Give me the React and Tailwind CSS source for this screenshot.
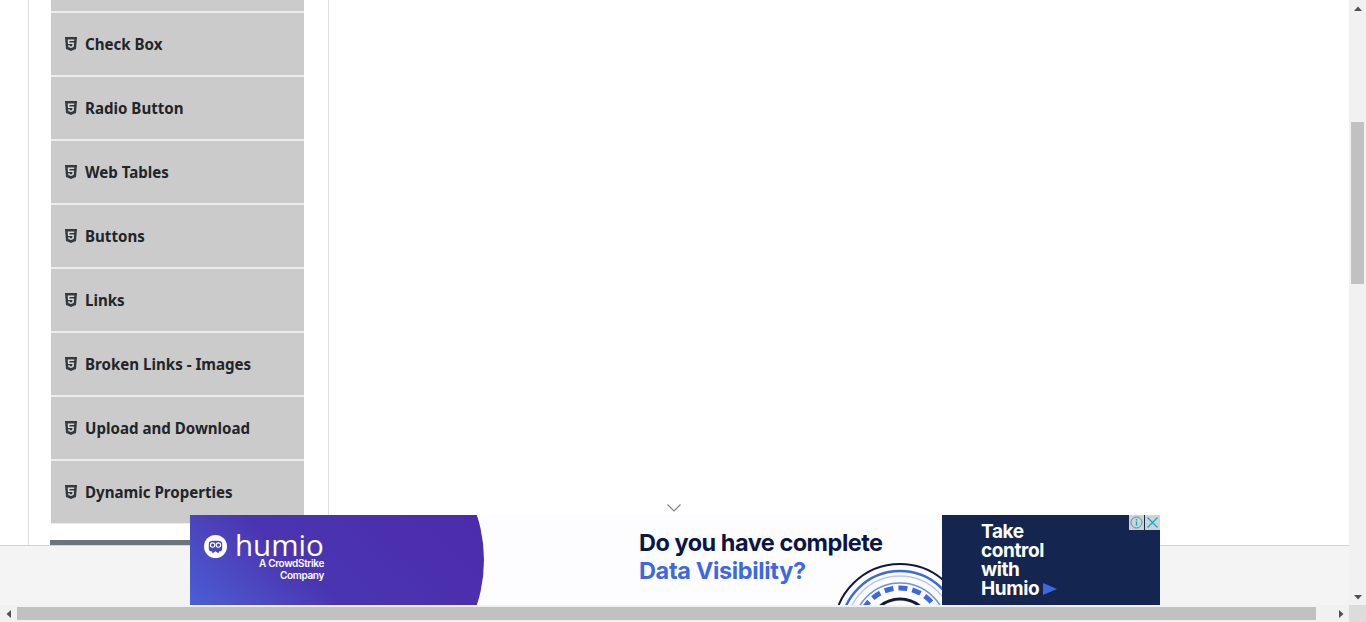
import React from "react";

const items = [
  "Check Box",
  "Radio Button",
  "Web Tables",
  "Buttons",
  "Links",
  "Broken Links - Images",
  "Upload and Download",
  "Dynamic Properties",
];

function Html5Icon() {
  return (
    <svg viewBox="0 0 12 14" className="w-[12px] h-[14px] mr-[8px] shrink-0">
      <path d="M0 0H12L11 12L6 14L1 12Z" fill="#343a40" />
      <path d="M2.700 2.500H9.300L9.150 4H4.400L4.500 5.500H9L8.650 10L6 10.900L3.350 10L3.200 8.300H4.700L4.780 9L6 9.400L7.220 9L7.350 7H3Z" fill="#d8d8d8" />
    </svg>
  );
}

function Row({ label }) {
  return (
    <div className="h-[64px] mx-[1px] flex items-center bg-[#cbcbcb] border-y border-[#ececec] pl-[14px]">
      <Html5Icon />
      <span className="text-[15.100px] font-bold text-[#212529]">{label}</span>
    </div>
  );
}

function Tri({ className, d }) {
  return (
    <svg viewBox="0 0 8 8" className={className}>
      <path d={d} fill="#505050" />
    </svg>
  );
}

function Ad() {
  return (
    <div className="absolute left-[190px] top-[515px] w-[970px] h-[90px] overflow-hidden bg-[#fdfdff] flex">
      <div className="relative w-[294px] h-full overflow-hidden">
        <div className="absolute left-[-60px] top-[-115px] w-[354px] h-[320px] rounded-[50%] bg-gradient-to-tr from-[#4a66dc] from-[22%] via-[#4a35b0] via-[48%] to-[#4d25a8]" />
        <svg viewBox="0 0 24 24" className="absolute left-[14px] top-[20px] w-[23px] h-[23px]">
          <circle cx="12" cy="12" r="12" fill="#fff" />
          <path d="M5 9c0-2 2-3 4-3h6c2 0 4 1 4 3v5c0 2-1 3-3 3l-1 2-3-2-3 2-1-2c-2 0-3-1-3-3z" fill="#4a45c0" />
          <circle cx="9" cy="10.500" r="2.300" fill="none" stroke="#fff" strokeWidth="1.200" />
          <circle cx="15" cy="10.500" r="2.300" fill="none" stroke="#fff" strokeWidth="1.200" />
        </svg>
        <div className="absolute left-[45px] top-[17px] text-white text-[29.500px] leading-[25px] font-['Open_Sans',sans-serif] font-normal">humio</div>
        <div className="absolute right-[160px] top-[42px] w-[80px] text-right text-white text-[10px] leading-[12px] font-['Inter',sans-serif] font-semibold tracking-[-0.35px]">
          A CrowdStrike Company
        </div>
      </div>
      <div className="relative flex-1 h-full">
        <div className="absolute left-[155px] top-[13px] text-[23.500px] leading-[30px] font-bold tracking-[-0.5px] text-[#0c1645] font-['Inter',sans-serif] whitespace-nowrap">
          Do you have complete
        </div>
        <div className="absolute left-[155px] top-[41px] text-[23.500px] leading-[30px] font-bold tracking-[-0.35px] text-[#3d68e0] font-['Inter',sans-serif] whitespace-nowrap">
          Data Visibility?
        </div>
        <svg viewBox="0 0 104 46" className="absolute left-[354px] top-[44px] w-[104px] h-[46px]" fill="none">
          <circle cx="62" cy="71" r="66" stroke="#10183f" strokeWidth="2" />
          <circle cx="62" cy="71" r="59" stroke="#3d68e0" strokeWidth="2.500" />
          <circle cx="62" cy="71" r="54" stroke="#b8c8f5" strokeWidth="1.500" />
          <circle cx="62" cy="71" r="47" stroke="#6d8eea" strokeWidth="1.500" />
          <circle cx="62" cy="71" r="42" stroke="#3d68e0" strokeWidth="5" strokeDasharray="9 5" />
          <circle cx="62" cy="71" r="31" stroke="#10183f" strokeWidth="3" />
        </svg>
      </div>
      <div className="relative w-[218px] h-full bg-[#14264f] pl-[39px] pt-[7px]">
        <div className="text-white text-[19px] leading-[19px] font-bold tracking-[-0.4px] font-['Inter',sans-serif]">
          <div>Take</div>
          <div>control</div>
          <div>with</div>
          <div className="flex items-center">
            Humio
            <svg viewBox="0 0 14 12" className="w-[14px] h-[12px] ml-[4px]"><path d="M0 0L14 6L0 12Z" fill="#3d68e0" /></svg>
          </div>
        </div>
        <div className="absolute right-0 top-0 flex gap-[1px]">
          <div className="w-[15px] h-[15px] bg-[#d2d2d2] flex items-center justify-center">
            <svg viewBox="0 0 15 15" className="w-[15px] h-[15px]" fill="none" stroke="#00aecd">
              <circle cx="7.500" cy="7.500" r="5.500" />
              <path d="M7.500 6.500v4M7.500 4v1.500" strokeWidth="1.400" />
            </svg>
          </div>
          <div className="w-[15px] h-[15px] bg-[#d2d2d2] flex items-center justify-center">
            <svg viewBox="0 0 15 15" className="w-[15px] h-[15px]" fill="none" stroke="#00aecd" strokeWidth="1.200">
              <path d="M2.500 2.500l10 10M12.500 2.500l-10 10" />
            </svg>
          </div>
        </div>
      </div>
    </div>
  );
}

export default function App() {
  return (
    <div className="relative w-[1366px] h-[622px] overflow-hidden bg-white font-['Noto_Sans','Open_Sans',sans-serif]">
      <div className="flex h-[605px]">
        <main className="w-[1349px] h-full overflow-hidden">
          <div className="ml-[28px] w-[301px] h-full border-x border-[#dedede] pl-[21px] pr-[23px] mt-[-52px]">
            <div className="h-[64px] mx-[1px] bg-[#cbcbcb] border-y border-[#ececec]" />
            {items.map((label) => (
              <Row key={label} label={label} />
            ))}
            <div className="mt-[16px] h-[40px] bg-[#6c757d]" />
          </div>
        </main>
        <div className="w-[17px] h-full bg-[#f1f1f1] flex flex-col items-center justify-between">
          <div className="h-[17px] flex items-center justify-center">
            <Tri className="w-[8px] h-[8px]" d="M4 1.500L8 6H0Z" />
          </div>
          <div className="flex-1 w-full px-[2px] pt-[105px] pb-[304px]">
            <div className="h-full bg-[#c1c1c1]" />
          </div>
          <div className="h-[17px] flex items-center justify-center">
            <Tri className="w-[8px] h-[8px]" d="M0 2H8L4 6.500Z" />
          </div>
        </div>
      </div>
      <div className="flex h-[17px] bg-[#f1f1f1]">
        <div className="w-[17px] flex items-center justify-center">
          <Tri className="w-[8px] h-[8px]" d="M6 0V8L1.500 4Z" />
        </div>
        <div className="w-[1315px] py-[2px] pr-[16px]">
          <div className="h-full bg-[#c1c1c1]" />
        </div>
        <div className="w-[17px] flex items-center justify-center">
          <Tri className="w-[8px] h-[8px]" d="M2 0V8L6.500 4Z" />
        </div>
        <div className="w-[17px] bg-[#dcdcdc]" />
      </div>
      <div className="absolute left-0 top-[545px] w-[1349px] h-[60px] bg-[#f4f4f4] border-t border-[#d3d3d3]" />
      <svg viewBox="0 0 14 8" className="absolute left-[667px] top-[504px] w-[14px] h-[8px]" fill="none" stroke="#808080" strokeWidth="1.200">
        <path d="M0.500 0.500L7 7L13.500 0.500" />
      </svg>
      <Ad />
    </div>
  );
}
